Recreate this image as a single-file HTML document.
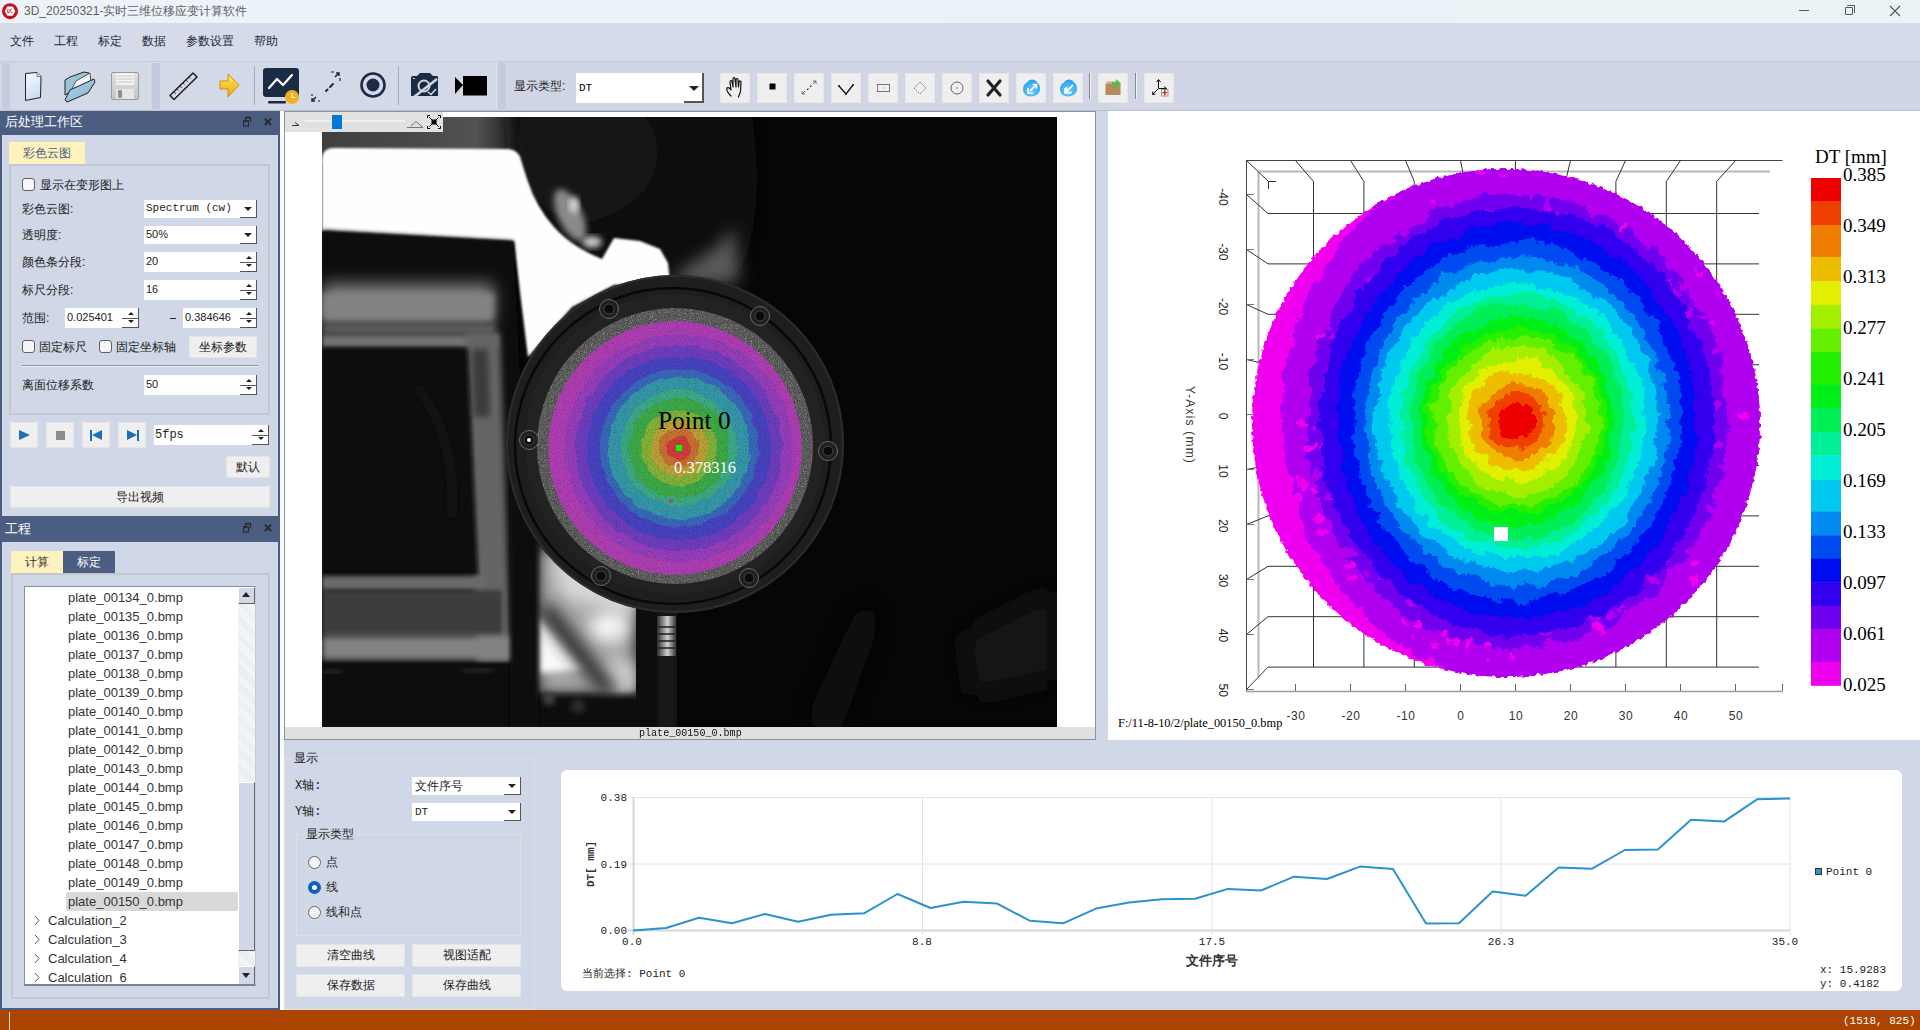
<!DOCTYPE html>
<html><head><meta charset="utf-8">
<style>
*{box-sizing:border-box;margin:0;padding:0}
html,body{width:1920px;height:1030px;overflow:hidden;background:#d0d7e6;font-family:"Liberation Sans",sans-serif;font-size:12px;color:#222}
.a{position:absolute}
.t{position:absolute;white-space:nowrap;line-height:1}
.btn{position:absolute;background:#efefef;border:1px solid #e4e4e4;text-align:center;color:#222;font-size:12px}
.field{position:absolute;background:#fff}
.mono{font-family:"Liberation Mono",monospace}
.spin:after{content:"";position:absolute;right:0;top:0;width:17px;height:100%}
.arrbtn{position:absolute;right:0;top:0;bottom:0;width:17px;border-right:1px solid #555;border-bottom:1px solid #555;background:#fff}
.arrbtn:before{content:"";position:absolute;left:4px;top:50%;margin-top:-2px;border-left:4px solid transparent;border-right:4px solid transparent;border-top:4px solid #222}
.spinbtn{position:absolute;right:0;top:0;bottom:0;width:17px;border-right:1px solid #555;border-bottom:1px solid #555}
.spinbtn i{position:absolute;left:0;right:0;top:50%;height:1px;background:#555}
.spinbtn b{position:absolute;left:6px;width:0;height:0;border-left:3px solid transparent;border-right:3px solid transparent}
.spinbtn b.u{top:4px;border-bottom:3px solid #222}
.spinbtn b.d{bottom:4px;border-top:3px solid #222}
.cb{position:absolute;width:13px;height:13px;border:1px solid #606060;border-radius:3px;background:#f6f6f6}
.hdr{position:absolute;left:0;width:280px;background:#4b5d80;color:#fff}
.grp{position:absolute;border:2px solid #c3c8ce}
.tab{position:absolute;text-align:center;font-size:12px;line-height:22px}
.tb{position:absolute;top:73px;width:30px;height:30px;background:#efefef;border:1px solid #e6e6e6}
.row{position:absolute;left:68px;font-family:"Liberation Sans",sans-serif;font-size:13px;color:#333;line-height:19px;height:19px}
.c{display:inline-block;width:1em;text-align:center;font-style:normal;overflow:visible}
</style></head><body>

<!-- title bar -->
<div class="a" style="left:0;top:0;width:1920px;height:23px;background:linear-gradient(90deg,#eef3fa,#eaf1f8 50%,#eaf3f5)"></div>
<svg class="a" style="left:0;top:0" width="22" height="23"><circle cx="10" cy="11.2" r="8" fill="#c8101c"/><path d="M7.2 6.5H12.8L15.2 11.2L12.8 15.8H7.2L4.8 11.2Z" fill="#fff"/><path d="M7.8 9.2V12.6H9.2M10 9.2V12.6M10.5 9.5L12 9.2M11 12.3H12.5" stroke="#c8101c" stroke-width="0.9" fill="none"/></svg>
<div class="t" style="left:24px;top:5px;font-size:12px;color:#606060">3D_20250321-<i class="c">实</i><i class="c">时</i><i class="c">三</i><i class="c">维</i><i class="c">位</i><i class="c">移</i><i class="c">应</i><i class="c">变</i><i class="c">计</i><i class="c">算</i><i class="c">软</i><i class="c">件</i></div>
<div class="a" style="left:1799px;top:10px;width:10px;height:1px;background:#555"></div>
<div class="a" style="left:1845px;top:7px;width:8px;height:8px;border:1px solid #555;border-radius:1px"></div>
<div class="a" style="left:1847px;top:5px;width:8px;height:8px;border-top:1px solid #555;border-right:1px solid #555;border-radius:1px"></div>
<svg class="a" style="left:1889px;top:5px" width="12" height="12"><path d="M1 1L11 11M11 1L1 11" stroke="#555" stroke-width="1.1"/></svg>

<!-- menu bar -->
<div class="a" style="left:0;top:23px;width:1920px;height:38px;background:#d5dbe8"></div>
<div class="t" style="left:10px;top:35px;font-size:12px;color:#1e2a40"><i class="c">文</i><i class="c">件</i></div>
<div class="t" style="left:54px;top:35px;font-size:12px;color:#1e2a40"><i class="c">工</i><i class="c">程</i></div>
<div class="t" style="left:98px;top:35px;font-size:12px;color:#1e2a40"><i class="c">标</i><i class="c">定</i></div>
<div class="t" style="left:142px;top:35px;font-size:12px;color:#1e2a40"><i class="c">数</i><i class="c">据</i></div>
<div class="t" style="left:186px;top:35px;font-size:12px;color:#1e2a40"><i class="c">参</i><i class="c">数</i><i class="c">设</i><i class="c">置</i></div>
<div class="t" style="left:254px;top:35px;font-size:12px;color:#1e2a40"><i class="c">帮</i><i class="c">助</i></div>

<!-- toolbar -->
<div class="a" style="left:0;top:61px;width:1920px;height:50px;background:#d0d6e5;border-top:1px solid #c2cadc;border-bottom:1px solid #b9c0d0"></div>
<!-- toolbar groups -->
<div class="a" style="left:1px;top:62px;width:149px;height:47px;background:#d3d9e7;border-right:1px solid #dfe3ec"></div>
<div class="a" style="left:2px;top:63px;width:8px;height:46px;background:#c4cbdf"></div>
<div class="a" style="left:151px;top:62px;width:346px;height:47px;background:#d3d9e7;border-right:1px solid #dfe3ec"></div>
<div class="a" style="left:152px;top:63px;width:8px;height:46px;background:#c4cbdf"></div>
<div class="a" style="left:498px;top:63px;width:8px;height:46px;background:#c4cbdf"></div>
<div class="a" style="left:254px;top:66px;width:1px;height:39px;background:#a4abba"></div>
<div class="a" style="left:398px;top:66px;width:1px;height:39px;background:#a4abba"></div>
<svg class="a" style="left:0;top:60px" width="500" height="50">
 <!-- new doc -->
 <defs>
  <linearGradient id="gdoc" x1="0" y1="0" x2="0.3" y2="1"><stop offset="0" stop-color="#fafcff"/><stop offset="1" stop-color="#c9dbf5"/></linearGradient>
  <linearGradient id="gfold" x1="0" y1="0" x2="1" y2="1"><stop offset="0" stop-color="#b9d6ea"/><stop offset="1" stop-color="#7fb0d2"/></linearGradient>
  <linearGradient id="gflop" x1="0" y1="0" x2="0" y2="1"><stop offset="0" stop-color="#e2e2e2"/><stop offset="1" stop-color="#c4c4c4"/></linearGradient>
  <linearGradient id="garr" x1="0" y1="0" x2="0" y2="1"><stop offset="0" stop-color="#ffe566"/><stop offset="1" stop-color="#f0a800"/></linearGradient>
 </defs>
 <path d="M25.5 13.5L37 12.5L41 16.5L40.5 37.5L25.5 40.5Z" fill="url(#gdoc)" stroke="#222" stroke-width="1"/>
 <path d="M37 12.5L37 16.5L41 16.5" fill="#ddd" stroke="#666" stroke-width="0.8"/>
 <!-- folder -->
 <path d="M65 20L70 17L84 12L89 13L91 21L65 35Z" fill="#9cc3de" stroke="#222" stroke-width="1"/>
 <path d="M68 36L76 21L90 13L91 23L70 34Z" fill="#f4f4f4" stroke="#333" stroke-width="0.8"/>
 <path d="M65 40L70 30L94 19L95 22L88 33L67 42Z" fill="url(#gfold)" stroke="#222" stroke-width="1"/>
 <!-- floppy -->
 <rect x="111.5" y="12.5" width="27" height="27" rx="1.5" fill="url(#gflop)" stroke="#9a9a9a"/>
 <rect x="116" y="13" width="18" height="12" fill="#f2f2f2"/>
 <path d="M117 16H133M117 19H133M117 22H133" stroke="#c8c8c8" stroke-width="1"/>
 <rect x="116" y="29" width="18" height="10" fill="#e6e6e6"/>
 <rect x="118" y="30" width="4" height="8" rx="1" fill="#909090"/>
 <!-- ruler -->
 <path d="M170 35.5L193 13L197 17L174 39.5Z" fill="none" stroke="#222" stroke-width="1.6" stroke-linejoin="round"/>
 <path d="M174 32l2 2M177 29l1.5 1.5M180 26l2 2M183 23l1.5 1.5M186 20l2 2M189 17l1.5 1.5" stroke="#333" stroke-width="0.9"/>
 <!-- yellow arrow -->
 <path d="M220 21H228V14L239 25L228 37V29H220Z" fill="url(#garr)" stroke="#c08000" stroke-width="0.8" stroke-linejoin="round"/>
 <!-- monitor -->
 <rect x="263" y="8" width="36" height="29" rx="3" fill="#1c2b44"/>
 <path d="M269 28L277 19L283 25L292 15" stroke="#fff" stroke-width="2.2" fill="none" stroke-linecap="round" stroke-linejoin="round"/>
 <rect x="268" y="41" width="18" height="2.5" rx="1" fill="#1c2b44"/>
 <circle cx="292" cy="37" r="7" fill="#f2b01e"/>
 <path d="M292 33V37.5H295" stroke="#fff" stroke-width="1.2" fill="none"/>
 <!-- expand -->
 <path d="M326 31L327.5 29.5M330 27L333 24" stroke="#1c2b44" stroke-width="2" stroke-linecap="round"/>
 <path d="M336 13L339 13L339 16M339 13L335 17" stroke="#1c2b44" stroke-width="1.5" fill="none"/>
 <path d="M331 12H334M340 18V21" stroke="#1c2b44" stroke-width="1.2"/>
 <path d="M312 41L315 41L312 41L312 38M312 41L316 37" stroke="#1c2b44" stroke-width="1.5" fill="none"/>
 <path d="M312 34V36M318 41H320" stroke="#1c2b44" stroke-width="1.2"/>
 <!-- target -->
 <circle cx="373" cy="25" r="11.5" fill="none" stroke="#1c2b44" stroke-width="2.6"/>
 <circle cx="373" cy="25" r="6.5" fill="#1c2b44"/>
 <!-- camera -->
 <path d="M411 18Q411 16 413 16H417L420 13H430L433 16H437Q438 16 438 18V36H411Z" fill="#1c2b44"/>
 <circle cx="424" cy="26" r="5.5" fill="none" stroke="#d0d6e5" stroke-width="2"/>
 <path d="M414 37L437 19" stroke="#d0d6e5" stroke-width="2.5"/>
 <path d="M428 32L431 34.5L436 29" stroke="#d0d6e5" stroke-width="1.6" fill="none"/>
 <path d="M413 18.5h2" stroke="#d0d6e5" stroke-width="1"/>
 <!-- video -->
 <path d="M455 17L463 25L455 34Z" fill="#000"/>
 <rect x="463" y="16" width="24" height="19.5" fill="#000"/>
</svg>
<div class="t" style="left:514px;top:80px;font-size:12px;color:#222"><i class="c">显</i><i class="c">示</i><i class="c">类</i><i class="c">型</i>:</div>
<div class="field" style="left:576px;top:73px;width:128px;height:30px"><span class="t mono" style="left:3px;top:10px;font-size:11px;color:#000">DT</span>
 <div class="a" style="right:0;top:0;width:20px;height:30px;border-right:2px solid #555;border-bottom:2px solid #555"></div>
 <div class="a" style="left:113px;top:13px;border-left:5px solid transparent;border-right:5px solid transparent;border-top:5px solid #222"></div></div>
<div class="tb" style="left:720px"></div>
<div class="tb" style="left:757px"></div>
<div class="tb" style="left:794px"></div>
<div class="tb" style="left:831px"></div>
<div class="tb" style="left:868px"></div>
<div class="tb" style="left:905px"></div>
<div class="tb" style="left:942px"></div>
<div class="tb" style="left:979px"></div>
<div class="tb" style="left:1016px"></div>
<div class="tb" style="left:1053px"></div>
<div class="tb" style="left:1098px"></div>
<div class="tb" style="left:1144px"></div>
<div class="a" style="left:1089px;top:73px;width:2px;height:26px;border-left:1px solid #888;border-right:1px solid #f4f4f4"></div>
<div class="a" style="left:1135px;top:73px;width:2px;height:26px;border-left:1px solid #888;border-right:1px solid #f4f4f4"></div>
<svg class="a" style="left:700px;top:60px" width="500" height="50">
 <defs>
  <radialGradient id="gcl" cx="0.5" cy="0.7" r="0.7"><stop offset="0" stop-color="#6cd0ff"/><stop offset="1" stop-color="#2a9ee6"/></radialGradient>
 </defs>
 <!-- hand -->
 <path d="M31 36C28 33 26 30 27 28C28 27 30 28 31 30L30 22C30 20 32 20 32 22L33 27L33 19C33 17 35 17 35 19L36 27L36 20C36 18 38 18 38 20L38.5 27L39 22C39 20.5 41 20.5 41 22L40.5 31C40 34 39 35 38.5 37" fill="#efefef" stroke="#111" stroke-width="1.2" stroke-linejoin="round" stroke-linecap="round"/>
 <!-- square -->
 <rect x="69.5" y="23.5" width="6" height="6" fill="#000"/>
 <!-- expand small -->
 <path d="M107 30L108.5 28.5M110 27L111.5 25.5" stroke="#444" stroke-width="1.2"/>
 <path d="M113 21H116V24M116 21L113 24M102 31V34H105M102 34L105 31" stroke="#555" stroke-width="0.8" fill="none"/>
 <!-- V -->
 <path d="M139 26L146 34L153 25" stroke="#111" stroke-width="1.3" fill="none"/>
 <circle cx="139" cy="26" r="1" fill="#111"/><circle cx="146" cy="34" r="1" fill="#111"/><circle cx="153" cy="25" r="1" fill="#111"/>
 <!-- rect -->
 <rect x="177.5" y="24.5" width="12" height="7" fill="none" stroke="#777" stroke-width="1"/>
 <rect x="183" y="27.5" width="1" height="1" fill="#999"/>
 <!-- diamond -->
 <path d="M220 22L226 28L220 34L214 28Z" fill="none" stroke="#777" stroke-width="0.9" stroke-dasharray="2 1"/>
 <!-- circle -->
 <circle cx="257" cy="28" r="6" fill="none" stroke="#555" stroke-width="0.9"/>
 <circle cx="257" cy="28" r="0.8" fill="#555"/>
 <!-- X -->
 <path d="M288 21L300 35M300 21L288 35" stroke="#222" stroke-width="3.2" stroke-linecap="round"/>
 <!-- clouds -->
 <path d="M331 36.5C326 36.5 323 33 323 29C323 25.5 325 23.5 327 22.5C328 20.5 330 19.5 332 19.5C334.5 19.5 336.5 21 337.5 23C339.5 24 340 26.5 340 29C340 33.5 336 36.5 331 36.5Z" fill="url(#gcl)"/>
 <path d="M328 28V33H333M330 31L336 25M332.5 24.5H336.5V28.5" stroke="#fff" stroke-width="1.6" fill="none"/>
 <path d="M368 36.5C363 36.5 360 33 360 29C360 25.5 362 23.5 364 22.5C365 20.5 367 19.5 369 19.5C371.5 19.5 373.5 21 374.5 23C376.5 24 377 26.5 377 29C377 33.5 373 36.5 368 36.5Z" fill="url(#gcl)"/>
 <path d="M365 28V33H370M367 31L373 25M366.5 27V32.5H372" stroke="#fff" stroke-width="1.6" fill="none"/>
 <!-- box -->
 <path d="M405.5 24H420.5V35H405.5Z" fill="#b48d5c"/>
 <path d="M405.5 24L407 21.5H418L420.5 24Z" fill="#cfae7e"/>
 <path d="M412 22H416V19L421 23.5L416 28V25H412Z" fill="#4cc24c"/>
 <!-- axes -->
 <path d="M458.5 20V28.5L453 34M458.5 28.5H466" stroke="#111" stroke-width="1" fill="none"/>
 <path d="M456.5 22L458.5 19.5L460.5 22M464 26.5L466.5 28.5L464 30.5M452.8 31.5L452.5 34.5L455.5 34.2" stroke="#111" stroke-width="1" fill="none"/>
 <rect x="461.5" y="29.5" width="6.5" height="6.5" fill="#fff" stroke="#888" stroke-width="0.8"/>
 <path d="M464.75 30V35.5M462 32.75H467.5" stroke="#d00" stroke-width="1.2"/>
</svg>


<!-- status bar -->
<div class="a" style="left:0;top:1010px;width:1920px;height:20px;background:#ab4400"></div>
<div class="a" style="left:9px;top:1012px;width:1px;height:18px;background:#e8e8e8"></div>
<div class="t mono" style="left:1843px;top:1016px;font-size:11px;color:#fff">(1518, 825) 0</div>

<!-- left dock -->
<!-- left dock -->
<div class="a" style="left:0;top:111px;width:280px;height:899px;background:#4b5d80"></div>
<div class="a" style="left:2px;top:135px;width:276px;height:381px;background:#d0d7e6"></div>
<div class="a" style="left:2px;top:542px;width:276px;height:466px;background:#d0d7e6"></div>
<div class="a" style="left:280px;top:111px;width:4px;height:899px;background:#fbfbfb"></div>
<div class="t" style="left:5px;top:115px;font-size:13px;color:#fff"><i class="c">后</i><i class="c">处</i><i class="c">理</i><i class="c">工</i><i class="c">作</i><i class="c">区</i></div>
<svg class="a" style="left:240px;top:116px" width="36" height="14"><path d="M5.5 1.6H10.5V6.2M5.5 1.6V4" stroke="#2a2a2a" stroke-width="1.2" fill="none"/><path d="M5.2 1.7H10.7" stroke="#2a2a2a" stroke-width="1.6"/><rect x="3.6" y="5.2" width="4.9" height="4.9" fill="none" stroke="#2a2a2a" stroke-width="1.1"/><path d="M3.4 4.9H8.8" stroke="#2a2a2a" stroke-width="1.6"/><path d="M24.7 2.6L31 9M31 2.6L24.7 9" stroke="#2a2a2a" stroke-width="1.9"/></svg>

<div class="tab" style="left:9px;top:142px;width:76px;height:22px;background:#fff2bf;color:#4b5d80"><i class="c">彩</i><i class="c">色</i><i class="c">云</i><i class="c">图</i></div>
<div class="grp" style="left:9px;top:164px;width:261px;height:251px"></div>
<div class="cb" style="left:22px;top:178px"></div>
<div class="t" style="left:40px;top:179px"><i class="c">显</i><i class="c">示</i><i class="c">在</i><i class="c">变</i><i class="c">形</i><i class="c">图</i><i class="c">上</i></div>
<div class="t" style="left:22px;top:203px"><i class="c">彩</i><i class="c">色</i><i class="c">云</i><i class="c">图</i>:</div>
<div class="field" style="left:144px;top:200px;width:113px;height:18px"><span class="t mono" style="left:2px;top:3px;font-size:11px">Spectrum (cw)</span><div class="arrbtn"></div></div>
<div class="t" style="left:22px;top:229px"><i class="c">透</i><i class="c">明</i><i class="c">度</i>:</div>
<div class="field" style="left:144px;top:226px;width:113px;height:18px"><span class="t" style="left:2px;top:3px;font-size:11px">50%</span><div class="arrbtn"></div></div>
<div class="t" style="left:22px;top:256px"><i class="c">颜</i><i class="c">色</i><i class="c">条</i><i class="c">分</i><i class="c">段</i>:</div>
<div class="field" style="left:144px;top:252px;width:113px;height:20px"><span class="t" style="left:2px;top:4px;font-size:11px">20</span><div class="spinbtn"><b class="u"></b><i></i><b class="d"></b></div></div>
<div class="t" style="left:22px;top:284px"><i class="c">标</i><i class="c">尺</i><i class="c">分</i><i class="c">段</i>:</div>
<div class="field" style="left:144px;top:280px;width:113px;height:20px"><span class="t" style="left:2px;top:4px;font-size:11px">16</span><div class="spinbtn"><b class="u"></b><i></i><b class="d"></b></div></div>
<div class="t" style="left:22px;top:312px"><i class="c">范</i><i class="c">围</i>:</div>
<div class="field" style="left:65px;top:308px;width:74px;height:20px"><span class="t" style="left:2px;top:4px;font-size:11px">0.025401</span><div class="spinbtn"><b class="u"></b><i></i><b class="d"></b></div></div>
<div class="a" style="left:170px;top:318px;width:6px;height:1px;background:#222"></div>
<div class="field" style="left:183px;top:308px;width:74px;height:20px"><span class="t" style="left:2px;top:4px;font-size:11px">0.384646</span><div class="spinbtn"><b class="u"></b><i></i><b class="d"></b></div></div>
<div class="cb" style="left:22px;top:340px"></div>
<div class="t" style="left:39px;top:341px"><i class="c">固</i><i class="c">定</i><i class="c">标</i><i class="c">尺</i></div>
<div class="cb" style="left:99px;top:340px"></div>
<div class="t" style="left:116px;top:341px"><i class="c">固</i><i class="c">定</i><i class="c">坐</i><i class="c">标</i><i class="c">轴</i></div>
<div class="btn" style="left:189px;top:336px;width:68px;height:22px;line-height:20px"><i class="c">坐</i><i class="c">标</i><i class="c">参</i><i class="c">数</i></div>
<div class="a" style="left:22px;top:365px;width:236px;height:1px;background:#8e96a6"></div>
<div class="a" style="left:22px;top:366px;width:236px;height:1px;background:#eef0f4"></div>
<div class="t" style="left:22px;top:379px"><i class="c">离</i><i class="c">面</i><i class="c">位</i><i class="c">移</i><i class="c">系</i><i class="c">数</i></div>
<div class="field" style="left:144px;top:375px;width:113px;height:20px"><span class="t" style="left:2px;top:4px;font-size:11px">50</span><div class="spinbtn"><b class="u"></b><i></i><b class="d"></b></div></div>

<div class="btn" style="left:10px;top:422px;width:28px;height:26px"><div class="a" style="left:8px;top:7px;border-top:5px solid transparent;border-bottom:5px solid transparent;border-left:11px solid #1a6fb5"></div></div>
<div class="btn" style="left:46px;top:422px;width:28px;height:26px"><div class="a" style="left:9px;top:8px;width:9px;height:9px;background:#8c8c8c"></div></div>
<div class="btn" style="left:82px;top:422px;width:28px;height:26px"><div class="a" style="left:7px;top:7px;width:2px;height:11px;background:#1a6fb5"></div><div class="a" style="left:9px;top:7px;border-top:5.5px solid transparent;border-bottom:5.5px solid transparent;border-right:10px solid #1a6fb5"></div></div>
<div class="btn" style="left:118px;top:422px;width:28px;height:26px"><div class="a" style="left:8px;top:7px;border-top:5.5px solid transparent;border-bottom:5.5px solid transparent;border-left:10px solid #1a6fb5"></div><div class="a" style="left:18px;top:7px;width:2px;height:11px;background:#1a6fb5"></div></div>
<div class="field" style="left:154px;top:425px;width:115px;height:20px"><span class="t mono" style="left:1px;top:4px;font-size:12px">5fps</span><div class="spinbtn"><b class="u"></b><i></i><b class="d"></b></div></div>
<div class="btn" style="left:226px;top:456px;width:44px;height:22px;line-height:20px"><i class="c">默</i><i class="c">认</i></div>
<div class="btn" style="left:10px;top:486px;width:260px;height:22px;line-height:20px"><i class="c">导</i><i class="c">出</i><i class="c">视</i><i class="c">频</i></div>

<!-- panel 2 -->
<div class="t" style="left:5px;top:522px;font-size:13px;color:#fff"><i class="c">工</i><i class="c">程</i></div>
<svg class="a" style="left:240px;top:522px" width="36" height="14"><path d="M5.5 1.6H10.5V6.2M5.5 1.6V4" stroke="#2a2a2a" stroke-width="1.2" fill="none"/><path d="M5.2 1.7H10.7" stroke="#2a2a2a" stroke-width="1.6"/><rect x="3.6" y="5.2" width="4.9" height="4.9" fill="none" stroke="#2a2a2a" stroke-width="1.1"/><path d="M3.4 4.9H8.8" stroke="#2a2a2a" stroke-width="1.6"/><path d="M24.7 2.6L31 9M31 2.6L24.7 9" stroke="#2a2a2a" stroke-width="1.9"/></svg>
<div class="tab" style="left:11px;top:551px;width:52px;height:22px;background:#fff2bf;color:#333"><i class="c">计</i><i class="c">算</i></div>
<div class="tab" style="left:63px;top:551px;width:52px;height:22px;background:#4b5d80;color:#fff"><i class="c">标</i><i class="c">定</i></div>
<div class="grp" style="left:11px;top:573px;width:259px;height:426px"></div>
<div class="a" style="left:24px;top:586px;width:232px;height:400px;background:#fff;border-top:1px solid #8a9098;border-left:1px solid #8a9098;border-right:1px solid #c8ccd2;border-bottom:2px solid #7d848e;overflow:hidden">
<div class="row" style="left:43px;top:1px">plate_00134_0.bmp</div>
<div class="row" style="left:43px;top:20px">plate_00135_0.bmp</div>
<div class="row" style="left:43px;top:39px">plate_00136_0.bmp</div>
<div class="row" style="left:43px;top:58px">plate_00137_0.bmp</div>
<div class="row" style="left:43px;top:77px">plate_00138_0.bmp</div>
<div class="row" style="left:43px;top:96px">plate_00139_0.bmp</div>
<div class="row" style="left:43px;top:115px">plate_00140_0.bmp</div>
<div class="row" style="left:43px;top:134px">plate_00141_0.bmp</div>
<div class="row" style="left:43px;top:153px">plate_00142_0.bmp</div>
<div class="row" style="left:43px;top:172px">plate_00143_0.bmp</div>
<div class="row" style="left:43px;top:191px">plate_00144_0.bmp</div>
<div class="row" style="left:43px;top:210px">plate_00145_0.bmp</div>
<div class="row" style="left:43px;top:229px">plate_00146_0.bmp</div>
<div class="row" style="left:43px;top:248px">plate_00147_0.bmp</div>
<div class="row" style="left:43px;top:267px">plate_00148_0.bmp</div>
<div class="row" style="left:43px;top:286px">plate_00149_0.bmp</div>
<div class="a" style="left:41px;top:305px;width:172px;height:19px;background:#d9d9d9;border-radius:2px"></div>
<div class="row" style="left:43px;top:305px">plate_00150_0.bmp</div>
<svg class="a" style="left:8px;top:324px" width="8" height="19"><path d="M2 5L6 9.5L2 14" stroke="#555" fill="none" stroke-width="1"/></svg>
<div class="row" style="left:23px;top:324px">Calculation_2</div>
<svg class="a" style="left:8px;top:343px" width="8" height="19"><path d="M2 5L6 9.5L2 14" stroke="#555" fill="none" stroke-width="1"/></svg>
<div class="row" style="left:23px;top:343px">Calculation_3</div>
<svg class="a" style="left:8px;top:362px" width="8" height="19"><path d="M2 5L6 9.5L2 14" stroke="#555" fill="none" stroke-width="1"/></svg>
<div class="row" style="left:23px;top:362px">Calculation_4</div>
<svg class="a" style="left:8px;top:381px" width="8" height="19"><path d="M2 5L6 9.5L2 14" stroke="#555" fill="none" stroke-width="1"/></svg>
<div class="row" style="left:23px;top:381px">Calculation_6</div>
<div class="a" style="left:213px;top:0;width:17px;height:398px;background:repeating-linear-gradient(45deg,#e6e9ef 0 1px,#f8f9fb 1px 2px)"></div>
<div class="a" style="left:213px;top:0;width:17px;height:17px;background:#d0d7e6;border-top:1px solid #fff;border-left:1px solid #fff;border-right:1px solid #666;border-bottom:1px solid #666"><div class="a" style="left:3px;top:4px;border-left:4.5px solid transparent;border-right:4.5px solid transparent;border-bottom:5px solid #222"></div></div>
<div class="a" style="left:213px;top:195px;width:17px;height:169px;background:#d0d7e6;border-top:1px solid #fff;border-left:1px solid #fff;border-right:1px solid #666;border-bottom:1px solid #666"></div>
<div class="a" style="left:213px;top:379px;width:17px;height:19px;background:#d0d7e6;border-top:1px solid #fff;border-left:1px solid #fff;border-right:1px solid #666;border-bottom:1px solid #666"><div class="a" style="left:3px;top:6px;border-left:4.5px solid transparent;border-right:4.5px solid transparent;border-top:5px solid #222"></div></div>
</div>


<!-- image view -->
<div class="a" style="left:284px;top:111px;width:812px;height:629px;background:#fff;border:1px solid #8a929c"></div>
<svg class="a" style="left:322px;top:117px" width="735" height="610" viewBox="0 0 735 610">
<defs>
 <filter id="b1" x="-20%" y="-20%" width="140%" height="140%"><feGaussianBlur stdDeviation="1.2"/></filter>
 <filter id="b2" x="-20%" y="-20%" width="140%" height="140%"><feGaussianBlur stdDeviation="2.2"/></filter>
 <filter id="b3" x="-20%" y="-20%" width="140%" height="140%"><feGaussianBlur stdDeviation="3"/></filter>
 <filter id="b8" x="-50%" y="-50%" width="200%" height="200%"><feGaussianBlur stdDeviation="8"/></filter>
 <filter id="b15" x="-50%" y="-50%" width="200%" height="200%"><feGaussianBlur stdDeviation="15"/></filter>
 <filter id="noise" x="0" y="0" width="100%" height="100%">
  <feTurbulence type="fractalNoise" baseFrequency="0.9" numOctaves="1" seed="3" result="n"/>
  <feColorMatrix type="matrix" values="0 0 0 0 0  0 0 0 0 0  0 0 0 0 0  2.2 0 0 0 -1.1" in="n" result="a"/>
  <feComposite in="SourceGraphic" in2="a" operator="in"/>
 </filter>
 <filter id="noise2" x="0" y="0" width="100%" height="100%">
  <feTurbulence type="fractalNoise" baseFrequency="0.85" numOctaves="1" seed="9" result="n"/>
  <feColorMatrix type="matrix" values="0 0 0 0 0  0 0 0 0 0  0 0 0 0 0  2.5 0 0 0 -1.4" in="n" result="a"/>
  <feComposite in="SourceGraphic" in2="a" operator="in"/>
 </filter>
 <filter id="rough" x="-10%" y="-10%" width="120%" height="120%">
  <feTurbulence type="fractalNoise" baseFrequency="0.09" numOctaves="2" seed="7" result="t"/>
  <feDisplacementMap in="SourceGraphic" in2="t" scale="6" xChannelSelector="R" yChannelSelector="G"/>
 </filter>
 <clipPath id="cdisc"><circle cx="353" cy="331" r="127"/></clipPath>
 <clipPath id="cring"><circle cx="353" cy="329" r="138"/></clipPath>
 <linearGradient id="gtop" x1="0" y1="0" x2="1" y2="0"><stop offset="0" stop-color="#404040"/><stop offset="0.45" stop-color="#484848"/><stop offset="0.75" stop-color="#525252"/><stop offset="0.92" stop-color="#2a2a2a"/><stop offset="1" stop-color="#151515"/></linearGradient>
 <radialGradient id="ghead" cx="0.3" cy="0.3" r="0.8"><stop offset="0" stop-color="#141414"/><stop offset="0.6" stop-color="#101010"/><stop offset="1" stop-color="#070707"/></radialGradient>
 <linearGradient id="gscr" x1="0" y1="0" x2="0" y2="1"><stop offset="0" stop-color="#555"/><stop offset="0.35" stop-color="#9a9a9a"/><stop offset="0.7" stop-color="#a4a4a4"/><stop offset="1" stop-color="#8a8a8a"/></linearGradient>
</defs>
<rect width="735" height="610" fill="#060606"/>
<path d="M0 0H205V48H0Z" fill="url(#gtop)"/>
<!-- head/hair -->
<path d="M185 -30H425Q445 70 425 140Q400 185 340 190L250 140Q205 100 190 40Z" fill="url(#ghead)" filter="url(#b8)"/>
<path d="M350 160L395 130L412 110L418 165L360 168Z" fill="#5a5a5a" filter="url(#b8)"/>
<ellipse cx="140" cy="590" rx="40" ry="12" fill="#1a1a1a" filter="url(#b8)"/>
<path d="M480 610L540 480L560 500L520 610Z" fill="#0d0d0d" filter="url(#b15)"/>
<path d="M640 520L735 470V560L650 580Z" fill="#141414" filter="url(#b15)"/>
<!-- white window -->
<path d="M0 43Q0 31 12 31L186 32Q197 33 199 43L205 62Q214 90 232 110Q250 130 280 142L292 121L318 124L338 132L346 146L348 165L292 168L250 190L222 222L206 240L198 175L192 124L0 114Z" fill="#fefefe" filter="url(#b1)"/>
<!-- ear -->
<ellipse cx="248" cy="98" rx="12" ry="28" fill="#8a8a8a" filter="url(#b3)" transform="rotate(-25 248 98)"/>
<ellipse cx="252" cy="88" rx="5" ry="8" fill="#d8d8d8" filter="url(#b3)"/>
<ellipse cx="270" cy="125" rx="10" ry="6" fill="#c8c8c8" filter="url(#b3)"/>
<!-- monitor -->
<path d="M0 113L191 124L200 300L210 610L0 610Z" fill="#0b0b0b" filter="url(#b2)"/>
<path d="M0 166H172V206H0Z" fill="#7a7a7a" filter="url(#b8)"/>
<path d="M0 176H172V204H0Z" fill="#828282" filter="url(#b3)"/>
<path d="M0 206H174V218H0Z" fill="#5c5c5c" filter="url(#b3)"/>
<path d="M0 218H176V231H0Z" fill="#727272" filter="url(#b2)"/>
<path d="M143 216H178L189 545H155Z" fill="#656565" filter="url(#b3)"/>
<path d="M150 232L166 232L168 300L152 300Z" fill="#3a3a3a" filter="url(#b3)"/>
<path d="M0 231H145L156 459H0Z" fill="#0a0a0a" filter="url(#b2)"/>
<path d="M95 270Q135 320 130 400" stroke="#1e1e1e" stroke-width="4" fill="none" filter="url(#b3)"/>
<path d="M0 459H163V473H0Z" fill="#6a6a6a" filter="url(#b2)"/>
<path d="M0 473H180V519H0Z" fill="#3c3c3c" filter="url(#b2)"/>
<path d="M0 519H189V543H0Z" fill="#828282" filter="url(#b3)"/>
<rect x="0" y="546" width="205" height="64" fill="#0a0a0a" filter="url(#b1)"/>
<path d="M0 556H20M140 552H170" stroke="#262626" stroke-width="6" filter="url(#b3)"/>
<!-- bright patches right of monitor -->
<path d="M216 430L314 430L314 578L216 578Z" fill="#a8a8a8" filter="url(#b8)"/>
<path d="M230 440L314 440L314 500L240 480Z" fill="#d8d8d8" filter="url(#b8)"/>
<ellipse cx="287" cy="510" rx="20" ry="15" fill="#f6f6f6" filter="url(#b8)"/>
<path d="M218 500L262 552L218 556Z" fill="#fafafa" filter="url(#b3)"/>
<path d="M280 545H314V578H280Z" fill="#cfcfcf" filter="url(#b8)"/>
<path d="M222 490L290 578" stroke="#2a2a2a" stroke-width="17" filter="url(#b8)"/>
<rect x="210" y="578" width="110" height="40" fill="#0a0a0a" filter="url(#b3)"/>
<circle cx="227" cy="582" r="6" fill="#4a4a4a" filter="url(#b3)"/>
<circle cx="256" cy="589" r="7" fill="#2e2e2e" filter="url(#b3)"/>
<rect x="189" y="300" width="27" height="310" fill="#0c0c0c" filter="url(#b2)"/>
<!-- stand -->
<rect x="314" y="490" width="21" height="125" fill="#0d0d0d"/>
<rect x="335" y="490" width="20" height="125" fill="#141414"/>
<defs><linearGradient id="gcon" x1="0" y1="0" x2="1" y2="0"><stop offset="0" stop-color="#2a2a2a"/><stop offset="0.55" stop-color="#d0d0d0"/><stop offset="1" stop-color="#333"/></linearGradient></defs>
<rect x="335" y="499" width="19" height="40" fill="url(#gcon)"/>
<path d="M336 510H353M336 517H353M336 524H353M336 531H353" stroke="#1e1e1e" stroke-width="1.6"/>
<rect x="337" y="539" width="15" height="76" fill="#181818"/>
<!-- fixture -->
<circle cx="353" cy="327" r="169" fill="#1e1e1e"/>
<circle cx="353" cy="327" r="168" fill="none" stroke="#2c2c2c" stroke-width="2"/>
<circle cx="351" cy="329" r="158" fill="none" stroke="#080808" stroke-width="2.5"/>
<circle cx="353" cy="327" r="150" fill="#222"/>
<circle cx="353" cy="329" r="138" fill="#5c5c5c"/>
<g clip-path="url(#cring)"><rect x="200" y="180" width="310" height="300" fill="#000" filter="url(#noise)" opacity="0.7"/><rect x="200" y="180" width="310" height="300" fill="#fff" filter="url(#noise2)" opacity="0.65"/></g>

<g clip-path="url(#cdisc)">
<circle cx="353" cy="331" r="127" fill="rgb(172,62,178)"/>
<g filter="url(#rough)">
<circle cx="357" cy="331" r="114.0" fill="rgb(150,62,186)"/>
<circle cx="357" cy="331" r="103.0" fill="rgb(110,62,190)"/>
<circle cx="357" cy="331" r="92.0" fill="rgb(70,66,190)"/>
<circle cx="357" cy="331" r="79.0" fill="rgb(56,104,184)"/>
<circle cx="357" cy="331" r="71.0" fill="rgb(52,150,168)"/>
<circle cx="357" cy="331" r="58.0" fill="rgb(60,168,132)"/>
<circle cx="357" cy="331" r="50.0" fill="rgb(62,168,70)"/>
<circle cx="357" cy="331" r="38.0" fill="rgb(130,176,56)"/>
<circle cx="357" cy="331" r="28.5" fill="rgb(186,160,52)"/>
<circle cx="357" cy="331" r="20.0" fill="rgb(200,112,50)"/>
<circle cx="357" cy="331" r="12.0" fill="rgb(204,62,58)"/>
</g>
<rect x="220" y="195" width="270" height="270" fill="#000" filter="url(#noise)" opacity="0.35"/>
</g>
<circle cx="287" cy="192" r="9.5" fill="#202020" stroke="#6a6a6a" stroke-width="1"/><circle cx="287" cy="192" r="5" fill="#0a0a0a" stroke="#444" stroke-width="1"/>
<circle cx="438" cy="199" r="9.5" fill="#202020" stroke="#6a6a6a" stroke-width="1"/><circle cx="438" cy="199" r="5" fill="#0a0a0a" stroke="#444" stroke-width="1"/>
<circle cx="207" cy="323" r="9.5" fill="#202020" stroke="#6a6a6a" stroke-width="1"/><circle cx="207" cy="323" r="5" fill="#0a0a0a" stroke="#444" stroke-width="1"/>
<circle cx="506" cy="334" r="9.5" fill="#202020" stroke="#6a6a6a" stroke-width="1"/><circle cx="506" cy="334" r="5" fill="#0a0a0a" stroke="#444" stroke-width="1"/>
<circle cx="279" cy="459" r="9.5" fill="#202020" stroke="#6a6a6a" stroke-width="1"/><circle cx="279" cy="459" r="5" fill="#0a0a0a" stroke="#444" stroke-width="1"/>
<circle cx="427" cy="461" r="9.5" fill="#202020" stroke="#6a6a6a" stroke-width="1"/><circle cx="427" cy="461" r="5" fill="#0a0a0a" stroke="#444" stroke-width="1"/>
<circle cx="207" cy="323" r="2" fill="#fff"/>
<text x="336" y="312" font-family="Liberation Serif" font-size="25.4" fill="#000">Point 0</text>
<rect x="354" y="328" width="6" height="6" fill="#00ff00"/>
<text x="352" y="356" font-family="Liberation Serif" font-size="16.5" fill="#fff">0.378316</text>
<rect x="347" y="382" width="4" height="4" fill="#8a5a6a"/>
</svg>
<!-- slider overlay -->
<div class="a" style="left:285px;top:112px;width:158px;height:20px;background:#e1e1e1"></div>
<svg class="a" style="left:285px;top:112px" width="158" height="20">
 <rect x="20" y="8" width="100" height="2" fill="#f0f0f0"/>
 <rect x="47" y="3" width="10" height="14" fill="#0078d7"/>
 <path d="M122 15.5H138L131 9.5L126 14" stroke="#777" stroke-width="1" fill="none"/>
 <path d="M142.5 6V3.5H145M155.5 6V3.5H153M142.5 14V16.5H145M155.5 14V16.5H153" stroke="#000" stroke-width="1" fill="none"/>
 <path d="M144.5 5.5L147.5 8.5M153.5 5.5L150.5 8.5M144.5 14.5L147.5 11.5M153.5 14.5L150.5 11.5" stroke="#000" stroke-width="1"/>
 <rect x="146.5" y="7.5" width="5" height="5" fill="#000"/>
 <path d="M7 13.5H14M10 10.5L14 13.5" stroke="#333" stroke-width="1" fill="none"/>
</svg>
<div class="a" style="left:285px;top:727px;width:810px;height:12px;background:#e0e0e0"></div>
<div class="t mono" style="left:639px;top:728px;font-size:11px;color:#111;transform:scaleX(0.915);transform-origin:0 0">plate_00150_0.bmp</div>


<!-- 3d plot -->
<div class="a" style="left:1108px;top:111px;width:812px;height:629px;background:#fff"></div>
<svg class="a" style="left:1108px;top:111px" width="812" height="629" viewBox="1108 111 812 629">
<defs>
 <filter id="rough3" x="-10%" y="-10%" width="120%" height="120%">
  <feTurbulence type="fractalNoise" baseFrequency="0.06" numOctaves="3" seed="11" result="t"/>
  <feDisplacementMap in="SourceGraphic" in2="t" scale="14" xChannelSelector="R" yChannelSelector="G"/>
 </filter>
 <filter id="rough4" x="-10%" y="-10%" width="120%" height="120%">
  <feTurbulence type="fractalNoise" baseFrequency="0.12" numOctaves="2" seed="5" result="t"/>
  <feDisplacementMap in="SourceGraphic" in2="t" scale="5" xChannelSelector="R" yChannelSelector="G"/>
 </filter>
 <filter id="rough5" x="-5%" y="-5%" width="110%" height="110%">
  <feTurbulence type="fractalNoise" baseFrequency="0.25" numOctaves="1" seed="2" result="t"/>
  <feDisplacementMap in="SourceGraphic" in2="t" scale="6" xChannelSelector="R" yChannelSelector="G"/>
 </filter>
 <clipPath id="c3d"><circle cx="1506" cy="423" r="254"/></clipPath>
</defs>
<path d="M1246.5 160.5H1782.5M1246.5 160.5V691" stroke="#444" stroke-width="1" fill="none"/><path d="M1246 691.5H1782.5" stroke="#9a9a9a" stroke-width="1.6" fill="none"/>
<path d="M1258.5 171.5H1770M1258.5 171.5V677" stroke="#b8b8b8" stroke-width="2" fill="none"/>
<path d="M1295.5 160.5L1313.5 181.5V667" stroke="#333" stroke-width="1" fill="none"/>
<path d="M1350.5 160.5L1363.9 181.5V667" stroke="#333" stroke-width="1" fill="none"/>
<path d="M1405.5 160.5L1414.3 181.5V667" stroke="#333" stroke-width="1" fill="none"/>
<path d="M1460.5 160.5L1464.7 181.5V667" stroke="#333" stroke-width="1" fill="none"/>
<path d="M1515.5 160.5L1515.1 181.5V667" stroke="#333" stroke-width="1" fill="none"/>
<path d="M1570.5 160.5L1565.5 181.5V667" stroke="#333" stroke-width="1" fill="none"/>
<path d="M1625.5 160.5L1615.9 181.5V667" stroke="#333" stroke-width="1" fill="none"/>
<path d="M1680.5 160.5L1666.3 181.5V667" stroke="#333" stroke-width="1" fill="none"/>
<path d="M1735.5 160.5L1716.7 181.5V667" stroke="#333" stroke-width="1" fill="none"/>
<path d="M1246.5 194.5 L1268 213.5 H1759" stroke="#333" stroke-width="1" fill="none"/>
<path d="M1246.5 249.5 L1268 263.9 H1759" stroke="#333" stroke-width="1" fill="none"/>
<path d="M1246.5 304.5 L1268 314.3 H1759" stroke="#333" stroke-width="1" fill="none"/>
<path d="M1246.5 359.5 L1268 364.7 H1759" stroke="#333" stroke-width="1" fill="none"/>
<path d="M1246.5 414.5 L1268 415.1 H1759" stroke="#333" stroke-width="1" fill="none"/>
<path d="M1246.5 469.5 L1268 465.5 H1759" stroke="#333" stroke-width="1" fill="none"/>
<path d="M1246.5 524.5 L1268 515.9 H1759" stroke="#333" stroke-width="1" fill="none"/>
<path d="M1246.5 579.5 L1268 566.3 H1759" stroke="#333" stroke-width="1" fill="none"/>
<path d="M1246.5 634.5 L1268 616.7 H1759" stroke="#333" stroke-width="1" fill="none"/>
<path d="M1246.5 689.5 L1268 667.1 H1759" stroke="#333" stroke-width="1" fill="none"/>
<path d="M1246.5 160.5L1268.5 181.5H1276M1268.5 181.5V189" stroke="#333" stroke-width="1" fill="none"/>
<path d="M1246.5 194.5H1254" stroke="#777" stroke-width="1"/>
<path d="M1246.5 249.5H1254" stroke="#777" stroke-width="1"/>
<path d="M1246.5 304.5H1254" stroke="#777" stroke-width="1"/>
<path d="M1246.5 359.5H1254" stroke="#777" stroke-width="1"/>
<path d="M1246.5 414.5H1254" stroke="#777" stroke-width="1"/>
<path d="M1246.5 469.5H1254" stroke="#777" stroke-width="1"/>
<path d="M1246.5 524.5H1254" stroke="#777" stroke-width="1"/>
<path d="M1246.5 579.5H1254" stroke="#777" stroke-width="1"/>
<path d="M1246.5 634.5H1254" stroke="#777" stroke-width="1"/>
<path d="M1246.5 689.5H1254" stroke="#777" stroke-width="1"/>
<path d="M1295.5 691V684" stroke="#666" stroke-width="1"/>
<path d="M1350.5 691V684" stroke="#666" stroke-width="1"/>
<path d="M1405.5 691V684" stroke="#666" stroke-width="1"/>
<path d="M1460.5 691V684" stroke="#666" stroke-width="1"/>
<path d="M1515.5 691V684" stroke="#666" stroke-width="1"/>
<path d="M1570.5 691V684" stroke="#666" stroke-width="1"/>
<path d="M1625.5 691V684" stroke="#666" stroke-width="1"/>
<path d="M1680.5 691V684" stroke="#666" stroke-width="1"/>
<path d="M1735.5 691V684" stroke="#666" stroke-width="1"/>
<path d="M1782.5 691V684" stroke="#666" stroke-width="1"/>
<g filter="url(#rough5)"><g clip-path="url(#c3d)">
<rect x="1240" y="160" width="530" height="530" fill="rgb(239,0,239)"/>
<g filter="url(#rough3)">
<ellipse class="bd" cx="1524" cy="417" rx="242" ry="264" fill="rgb(176,0,239)"/>
<ellipse class="bd" cx="1517" cy="421" rx="211.0" ry="227.0" fill="rgb(113,0,239)"/>
<ellipse cx="1314" cy="317" rx="4.6" ry="4.7" fill="rgb(176,0,239)"/>
<ellipse cx="1695" cy="296" rx="4.5" ry="3.5" fill="rgb(176,0,239)"/>
<ellipse cx="1734" cy="370" rx="5.8" ry="3.9" fill="rgb(176,0,239)"/>
<ellipse cx="1449" cy="643" rx="2.2" ry="3.8" fill="rgb(239,0,239)"/>
<ellipse cx="1498" cy="184" rx="4.2" ry="4.0" fill="rgb(176,0,239)"/>
<ellipse cx="1671" cy="573" rx="3.1" ry="2.6" fill="rgb(176,0,239)"/>
<ellipse cx="1699" cy="271" rx="3.3" ry="2.7" fill="rgb(239,0,239)"/>
<ellipse cx="1488" cy="643" rx="3.2" ry="3.2" fill="rgb(239,0,239)"/>
<ellipse cx="1600" cy="630" rx="5.5" ry="4.2" fill="rgb(239,0,239)"/>
<ellipse cx="1321" cy="337" rx="2.5" ry="2.9" fill="rgb(239,0,239)"/>
<ellipse cx="1718" cy="503" rx="2.8" ry="4.0" fill="rgb(176,0,239)"/>
<ellipse cx="1305" cy="484" rx="4.2" ry="4.4" fill="rgb(239,0,239)"/>
<ellipse cx="1443" cy="633" rx="3.5" ry="4.3" fill="rgb(239,0,239)"/>
<ellipse cx="1694" cy="582" rx="4.2" ry="3.3" fill="rgb(239,0,239)"/>
<ellipse cx="1424" cy="652" rx="4.0" ry="3.8" fill="rgb(176,0,239)"/>
<ellipse cx="1722" cy="468" rx="4.9" ry="3.4" fill="rgb(176,0,239)"/>
<ellipse cx="1322" cy="534" rx="5.5" ry="4.9" fill="rgb(239,0,239)"/>
<ellipse cx="1311" cy="447" rx="5.2" ry="3.0" fill="rgb(239,0,239)"/>
<ellipse cx="1684" cy="563" rx="4.5" ry="2.9" fill="rgb(176,0,239)"/>
<ellipse cx="1354" cy="247" rx="3.7" ry="4.4" fill="rgb(176,0,239)"/>
<ellipse cx="1723" cy="308" rx="4.3" ry="3.5" fill="rgb(176,0,239)"/>
<ellipse cx="1649" cy="224" rx="2.9" ry="2.3" fill="rgb(176,0,239)"/>
<ellipse cx="1489" cy="661" rx="2.8" ry="2.6" fill="rgb(239,0,239)"/>
<ellipse cx="1716" cy="351" rx="5.1" ry="3.7" fill="rgb(176,0,239)"/>
<ellipse cx="1743" cy="414" rx="5.8" ry="3.2" fill="rgb(239,0,239)"/>
<ellipse cx="1716" cy="296" rx="2.2" ry="2.1" fill="rgb(239,0,239)"/>
<ellipse cx="1561" cy="177" rx="2.5" ry="3.1" fill="rgb(176,0,239)"/>
<ellipse cx="1586" cy="186" rx="5.9" ry="4.3" fill="rgb(176,0,239)"/>
<ellipse cx="1623" cy="228" rx="5.4" ry="3.9" fill="rgb(239,0,239)"/>
<ellipse cx="1419" cy="623" rx="3.4" ry="3.5" fill="rgb(239,0,239)"/>
<ellipse cx="1315" cy="492" rx="2.8" ry="2.4" fill="rgb(239,0,239)"/>
<ellipse cx="1694" cy="561" rx="5.2" ry="3.6" fill="rgb(239,0,239)"/>
<ellipse cx="1299" cy="482" rx="2.1" ry="2.2" fill="rgb(239,0,239)"/>
<ellipse cx="1404" cy="622" rx="3.2" ry="4.5" fill="rgb(239,0,239)"/>
<ellipse cx="1736" cy="434" rx="3.1" ry="4.2" fill="rgb(176,0,239)"/>
<ellipse cx="1550" cy="644" rx="5.9" ry="3.0" fill="rgb(176,0,239)"/>
<ellipse cx="1691" cy="592" rx="5.8" ry="3.0" fill="rgb(176,0,239)"/>
<ellipse cx="1594" cy="211" rx="5.2" ry="3.5" fill="rgb(176,0,239)"/>
<ellipse cx="1570" cy="192" rx="2.3" ry="3.9" fill="rgb(176,0,239)"/>
<ellipse cx="1597" cy="635" rx="3.7" ry="4.4" fill="rgb(176,0,239)"/>
<ellipse cx="1469" cy="662" rx="2.9" ry="4.0" fill="rgb(176,0,239)"/>
<ellipse cx="1736" cy="345" rx="3.6" ry="2.3" fill="rgb(176,0,239)"/>
<ellipse cx="1542" cy="193" rx="2.1" ry="2.5" fill="rgb(176,0,239)"/>
<ellipse cx="1353" cy="580" rx="3.7" ry="4.3" fill="rgb(239,0,239)"/>
<ellipse cx="1690" cy="552" rx="5.6" ry="4.8" fill="rgb(176,0,239)"/>
<ellipse cx="1327" cy="325" rx="5.6" ry="3.6" fill="rgb(176,0,239)"/>
<ellipse cx="1352" cy="584" rx="4.0" ry="3.5" fill="rgb(176,0,239)"/>
<ellipse cx="1435" cy="645" rx="3.1" ry="3.4" fill="rgb(239,0,239)"/>
<ellipse cx="1701" cy="304" rx="3.2" ry="4.6" fill="rgb(176,0,239)"/>
<ellipse cx="1441" cy="657" rx="5.2" ry="2.6" fill="rgb(176,0,239)"/>
<ellipse cx="1298" cy="498" rx="4.4" ry="4.6" fill="rgb(239,0,239)"/>
<ellipse cx="1715" cy="326" rx="2.1" ry="2.9" fill="rgb(239,0,239)"/>
<ellipse cx="1312" cy="353" rx="4.5" ry="4.5" fill="rgb(176,0,239)"/>
<ellipse cx="1411" cy="636" rx="3.2" ry="2.3" fill="rgb(239,0,239)"/>
<ellipse cx="1573" cy="176" rx="4.9" ry="2.2" fill="rgb(239,0,239)"/>
<ellipse cx="1330" cy="537" rx="4.0" ry="3.1" fill="rgb(176,0,239)"/>
<ellipse cx="1511" cy="653" rx="2.1" ry="3.7" fill="rgb(239,0,239)"/>
<ellipse cx="1501" cy="177" rx="6.0" ry="2.2" fill="rgb(239,0,239)"/>
<ellipse cx="1320" cy="519" rx="5.8" ry="4.1" fill="rgb(239,0,239)"/>
<ellipse cx="1661" cy="590" rx="3.5" ry="2.9" fill="rgb(176,0,239)"/>
<ellipse cx="1455" cy="645" rx="3.2" ry="3.8" fill="rgb(239,0,239)"/>
<ellipse cx="1722" cy="514" rx="3.3" ry="4.6" fill="rgb(176,0,239)"/>
<ellipse cx="1720" cy="314" rx="2.7" ry="3.9" fill="rgb(176,0,239)"/>
<ellipse cx="1466" cy="644" rx="2.8" ry="3.9" fill="rgb(239,0,239)"/>
<ellipse cx="1530" cy="197" rx="2.8" ry="3.0" fill="rgb(176,0,239)"/>
<ellipse cx="1478" cy="171" rx="5.0" ry="3.0" fill="rgb(239,0,239)"/>
<ellipse cx="1714" cy="337" rx="2.3" ry="3.7" fill="rgb(176,0,239)"/>
<ellipse cx="1507" cy="169" rx="3.6" ry="3.9" fill="rgb(176,0,239)"/>
<ellipse cx="1383" cy="226" rx="5.7" ry="3.9" fill="rgb(176,0,239)"/>
<ellipse cx="1679" cy="248" rx="5.2" ry="3.1" fill="rgb(176,0,239)"/>
<ellipse cx="1627" cy="200" rx="5.6" ry="4.1" fill="rgb(176,0,239)"/>
<ellipse cx="1302" cy="424" rx="5.6" ry="3.1" fill="rgb(239,0,239)"/>
<ellipse cx="1573" cy="661" rx="2.8" ry="2.4" fill="rgb(176,0,239)"/>
<ellipse cx="1686" cy="577" rx="3.0" ry="4.4" fill="rgb(176,0,239)"/>
<ellipse cx="1721" cy="487" rx="5.0" ry="3.5" fill="rgb(176,0,239)"/>
<ellipse cx="1434" cy="203" rx="4.1" ry="2.0" fill="rgb(239,0,239)"/>
<ellipse cx="1583" cy="645" rx="2.8" ry="2.7" fill="rgb(176,0,239)"/>
<ellipse cx="1742" cy="407" rx="5.1" ry="4.1" fill="rgb(176,0,239)"/>
<ellipse cx="1608" cy="201" rx="2.4" ry="3.3" fill="rgb(176,0,239)"/>
<ellipse cx="1350" cy="566" rx="5.5" ry="2.7" fill="rgb(239,0,239)"/>
<ellipse cx="1668" cy="562" rx="2.7" ry="2.1" fill="rgb(176,0,239)"/>
<ellipse cx="1691" cy="307" rx="2.1" ry="3.6" fill="rgb(176,0,239)"/>
<ellipse cx="1610" cy="614" rx="5.8" ry="4.9" fill="rgb(176,0,239)"/>
<ellipse cx="1351" cy="555" rx="4.0" ry="2.2" fill="rgb(176,0,239)"/>
<ellipse cx="1349" cy="552" rx="5.1" ry="4.2" fill="rgb(176,0,239)"/>
<ellipse cx="1717" cy="405" rx="4.8" ry="4.5" fill="rgb(176,0,239)"/>
<ellipse cx="1703" cy="318" rx="5.5" ry="3.0" fill="rgb(176,0,239)"/>
<ellipse cx="1370" cy="574" rx="2.5" ry="2.9" fill="rgb(176,0,239)"/>
<ellipse cx="1381" cy="575" rx="2.7" ry="4.0" fill="rgb(176,0,239)"/>
<ellipse cx="1446" cy="616" rx="5.2" ry="4.8" fill="rgb(176,0,239)"/>
<ellipse cx="1551" cy="639" rx="2.3" ry="2.7" fill="rgb(176,0,239)"/>
<ellipse cx="1622" cy="610" rx="4.2" ry="4.5" fill="rgb(176,0,239)"/>
<ellipse cx="1406" cy="233" rx="5.5" ry="3.8" fill="rgb(176,0,239)"/>
<ellipse cx="1547" cy="630" rx="5.4" ry="4.5" fill="rgb(176,0,239)"/>
<ellipse cx="1389" cy="242" rx="5.2" ry="3.2" fill="rgb(176,0,239)"/>
<ellipse cx="1596" cy="620" rx="5.7" ry="4.7" fill="rgb(176,0,239)"/>
<ellipse cx="1711" cy="429" rx="3.8" ry="4.7" fill="rgb(176,0,239)"/>
<ellipse cx="1668" cy="266" rx="2.3" ry="2.6" fill="rgb(176,0,239)"/>
<ellipse cx="1547" cy="207" rx="3.3" ry="4.9" fill="rgb(176,0,239)"/>
<ellipse cx="1718" cy="445" rx="5.5" ry="4.1" fill="rgb(176,0,239)"/>
<ellipse cx="1669" cy="283" rx="4.2" ry="4.9" fill="rgb(176,0,239)"/>
<ellipse cx="1653" cy="581" rx="6.0" ry="2.5" fill="rgb(176,0,239)"/>
<ellipse cx="1548" cy="201" rx="3.0" ry="5.0" fill="rgb(176,0,239)"/>
<ellipse cx="1555" cy="214" rx="6.0" ry="4.6" fill="rgb(176,0,239)"/>
<ellipse cx="1324" cy="448" rx="5.1" ry="3.8" fill="rgb(176,0,239)"/>
<ellipse cx="1510" cy="211" rx="3.9" ry="4.4" fill="rgb(176,0,239)"/>
<ellipse cx="1490" cy="211" rx="3.3" ry="3.4" fill="rgb(176,0,239)"/>
<ellipse cx="1313" cy="478" rx="5.7" ry="2.0" fill="rgb(176,0,239)"/>
<ellipse cx="1372" cy="278" rx="5.5" ry="3.6" fill="rgb(176,0,239)"/>
<ellipse cx="1685" cy="286" rx="5.7" ry="2.5" fill="rgb(176,0,239)"/>
<ellipse cx="1708" cy="508" rx="3.9" ry="4.3" fill="rgb(176,0,239)"/>
<ellipse cx="1329" cy="498" rx="4.9" ry="3.1" fill="rgb(176,0,239)"/>
<ellipse cx="1316" cy="426" rx="4.7" ry="2.2" fill="rgb(176,0,239)"/>
<ellipse cx="1319" cy="472" rx="4.7" ry="4.7" fill="rgb(176,0,239)"/>
<ellipse cx="1372" cy="585" rx="4.8" ry="3.2" fill="rgb(176,0,239)"/>
<ellipse cx="1332" cy="339" rx="4.6" ry="2.1" fill="rgb(176,0,239)"/>
<ellipse cx="1677" cy="292" rx="2.0" ry="2.3" fill="rgb(176,0,239)"/>
<ellipse cx="1411" cy="602" rx="5.4" ry="3.1" fill="rgb(176,0,239)"/>
<ellipse cx="1689" cy="314" rx="3.4" ry="4.9" fill="rgb(176,0,239)"/>
<ellipse cx="1649" cy="246" rx="2.5" ry="2.2" fill="rgb(176,0,239)"/>
<ellipse class="bd" cx="1517" cy="421" rx="197.0" ry="214.0" fill="rgb(50,0,239)"/>
<ellipse class="bd" cx="1517" cy="421" rx="179.5" ry="197.0" fill="rgb(0,12,239)"/>
<ellipse class="bd" cx="1517" cy="421" rx="164.5" ry="180.0" fill="rgb(0,75,239)"/>
<ellipse class="bd" cx="1517" cy="421" rx="151.8" ry="165.0" fill="rgb(0,138,239)"/>
<ellipse class="bd" cx="1517" cy="421" rx="142.0" ry="151.0" fill="rgb(0,201,239)"/>
<ellipse class="bd" cx="1517" cy="421" rx="127.5" ry="138.0" fill="rgb(0,239,214)"/>
<ellipse class="bd" cx="1517" cy="421" rx="116.5" ry="127.0" fill="rgb(0,239,151)"/>
<ellipse class="bd" cx="1517" cy="421" rx="106.5" ry="118.0" fill="rgb(0,239,88)"/>
<ellipse class="bd" cx="1517" cy="421" rx="96.5" ry="105.0" fill="rgb(0,239,25)"/>
<ellipse class="bd" cx="1517" cy="421" rx="90.0" ry="92.0" fill="rgb(37,239,0)"/>
<ellipse class="bd" cx="1517" cy="421" rx="84.0" ry="84.0" fill="rgb(100,239,0)"/>
<ellipse class="bd" cx="1517" cy="421" rx="69.5" ry="76.0" fill="rgb(164,239,0)"/>
<ellipse class="bd" cx="1517" cy="421" rx="59.0" ry="61.0" fill="rgb(227,239,0)"/>
<ellipse class="bd" cx="1517" cy="421" rx="50.0" ry="49.0" fill="rgb(239,189,0)"/>
<ellipse class="bd" cx="1517" cy="421" rx="37.5" ry="38.0" fill="rgb(239,126,0)"/>
<ellipse class="bd" cx="1517" cy="421" rx="29.5" ry="27.0" fill="rgb(239,63,0)"/>
<ellipse class="bd" cx="1517" cy="421" rx="20.0" ry="18.0" fill="rgb(239,0,0)"/>
</g></g></g>
<rect x="1494" y="527" width="14" height="14" fill="#fff"/>
<rect x="1811" y="178.0" width="30" height="23.8" fill="rgb(239,0,0)"/>
<rect x="1811" y="201.4" width="30" height="24.4" fill="rgb(239,63,0)"/>
<rect x="1811" y="225.4" width="30" height="31.9" fill="rgb(239,126,0)"/>
<rect x="1811" y="256.9" width="30" height="24.9" fill="rgb(239,189,0)"/>
<rect x="1811" y="281.4" width="30" height="23.8" fill="rgb(227,239,0)"/>
<rect x="1811" y="304.8" width="30" height="24.3" fill="rgb(164,239,0)"/>
<rect x="1811" y="328.7" width="30" height="23.7" fill="rgb(100,239,0)"/>
<rect x="1811" y="352.0" width="30" height="33.1" fill="rgb(37,239,0)"/>
<rect x="1811" y="384.7" width="30" height="23.7" fill="rgb(0,239,25)"/>
<rect x="1811" y="408.0" width="30" height="24.4" fill="rgb(0,239,88)"/>
<rect x="1811" y="432.0" width="30" height="23.8" fill="rgb(0,239,151)"/>
<rect x="1811" y="455.4" width="30" height="24.9" fill="rgb(0,239,214)"/>
<rect x="1811" y="479.9" width="30" height="31.9" fill="rgb(0,201,239)"/>
<rect x="1811" y="511.4" width="30" height="24.3" fill="rgb(0,138,239)"/>
<rect x="1811" y="535.3" width="30" height="23.8" fill="rgb(0,75,239)"/>
<rect x="1811" y="558.7" width="30" height="23.8" fill="rgb(0,12,239)"/>
<rect x="1811" y="582.1" width="30" height="24.3" fill="rgb(50,0,239)"/>
<rect x="1811" y="606.0" width="30" height="23.8" fill="rgb(113,0,239)"/>
<rect x="1811" y="629.4" width="30" height="33.0" fill="rgb(176,0,239)"/>
<rect x="1811" y="662.0" width="30" height="23.8" fill="rgb(239,0,239)"/>
<text x="1843" y="181" font-family="Liberation Serif" font-size="19" fill="#000">0.385</text>
<text x="1843" y="232" font-family="Liberation Serif" font-size="19" fill="#000">0.349</text>
<text x="1843" y="283" font-family="Liberation Serif" font-size="19" fill="#000">0.313</text>
<text x="1843" y="334" font-family="Liberation Serif" font-size="19" fill="#000">0.277</text>
<text x="1843" y="385" font-family="Liberation Serif" font-size="19" fill="#000">0.241</text>
<text x="1843" y="436" font-family="Liberation Serif" font-size="19" fill="#000">0.205</text>
<text x="1843" y="487" font-family="Liberation Serif" font-size="19" fill="#000">0.169</text>
<text x="1843" y="538" font-family="Liberation Serif" font-size="19" fill="#000">0.133</text>
<text x="1843" y="589" font-family="Liberation Serif" font-size="19" fill="#000">0.097</text>
<text x="1843" y="640" font-family="Liberation Serif" font-size="19" fill="#000">0.061</text>
<text x="1843" y="691" font-family="Liberation Serif" font-size="19" fill="#000">0.025</text>
<text x="1815" y="163" font-family="Liberation Serif" font-size="19" fill="#000">DT [mm]</text>
<text x="0" y="0" transform="translate(1218.5 197.0) rotate(90)" text-anchor="middle" font-family="Liberation Sans" font-size="12" fill="#222">-40</text>
<text x="0" y="0" transform="translate(1218.5 251.8) rotate(90)" text-anchor="middle" font-family="Liberation Sans" font-size="12" fill="#222">-30</text>
<text x="0" y="0" transform="translate(1218.5 306.6) rotate(90)" text-anchor="middle" font-family="Liberation Sans" font-size="12" fill="#222">-20</text>
<text x="0" y="0" transform="translate(1218.5 361.4) rotate(90)" text-anchor="middle" font-family="Liberation Sans" font-size="12" fill="#222">-10</text>
<text x="0" y="0" transform="translate(1218.5 416.2) rotate(90)" text-anchor="middle" font-family="Liberation Sans" font-size="12" fill="#222">0</text>
<text x="0" y="0" transform="translate(1218.5 471.0) rotate(90)" text-anchor="middle" font-family="Liberation Sans" font-size="12" fill="#222">10</text>
<text x="0" y="0" transform="translate(1218.5 525.8) rotate(90)" text-anchor="middle" font-family="Liberation Sans" font-size="12" fill="#222">20</text>
<text x="0" y="0" transform="translate(1218.5 580.6) rotate(90)" text-anchor="middle" font-family="Liberation Sans" font-size="12" fill="#222">30</text>
<text x="0" y="0" transform="translate(1218.5 635.4) rotate(90)" text-anchor="middle" font-family="Liberation Sans" font-size="12" fill="#222">40</text>
<text x="0" y="0" transform="translate(1218.5 690.2) rotate(90)" text-anchor="middle" font-family="Liberation Sans" font-size="12" fill="#222">50</text>
<text x="0" y="0" transform="translate(1186 425) rotate(90)" text-anchor="middle" font-family="Liberation Sans" font-size="12" letter-spacing="1.2" fill="#333">Y-Axis (mm)</text>
<text x="1296.0" y="719.5" text-anchor="middle" font-family="Liberation Sans" font-size="12" letter-spacing="0.6" fill="#333">-30</text>
<text x="1351.0" y="719.5" text-anchor="middle" font-family="Liberation Sans" font-size="12" letter-spacing="0.6" fill="#333">-20</text>
<text x="1406.0" y="719.5" text-anchor="middle" font-family="Liberation Sans" font-size="12" letter-spacing="0.6" fill="#333">-10</text>
<text x="1461.0" y="719.5" text-anchor="middle" font-family="Liberation Sans" font-size="12" letter-spacing="0.6" fill="#333">0</text>
<text x="1516.0" y="719.5" text-anchor="middle" font-family="Liberation Sans" font-size="12" letter-spacing="0.6" fill="#333">10</text>
<text x="1571.0" y="719.5" text-anchor="middle" font-family="Liberation Sans" font-size="12" letter-spacing="0.6" fill="#333">20</text>
<text x="1626.0" y="719.5" text-anchor="middle" font-family="Liberation Sans" font-size="12" letter-spacing="0.6" fill="#333">30</text>
<text x="1681.0" y="719.5" text-anchor="middle" font-family="Liberation Sans" font-size="12" letter-spacing="0.6" fill="#333">40</text>
<text x="1736.0" y="719.5" text-anchor="middle" font-family="Liberation Sans" font-size="12" letter-spacing="0.6" fill="#333">50</text>
<text x="1118" y="727" font-family="Liberation Serif" font-size="12.4" fill="#000">F:/11-8-10/2/plate_00150_0.bmp</text>
</svg>

<!-- bottom -->
<!-- display group -->
<div class="grp" style="left:284px;top:758px;width:251px;height:252px;border-width:1px;border-color:#e3e0d8"></div>
<div class="t" style="left:292px;top:752px;padding:0 2px;background:#d0d7e6"><i class="c">显</i><i class="c">示</i></div>
<div class="t" style="left:295px;top:780px;font-family:'Liberation Mono',monospace;font-size:12px">X<i class="c">轴</i>:</div>
<div class="field" style="left:412px;top:777px;width:109px;height:18px"><span class="t" style="left:3px;top:3px;font-size:12px"><i class="c">文</i><i class="c">件</i><i class="c">序</i><i class="c">号</i></span><div class="arrbtn"></div></div>
<div class="t" style="left:295px;top:806px;font-family:'Liberation Mono',monospace;font-size:12px">Y<i class="c">轴</i>:</div>
<div class="field" style="left:412px;top:803px;width:109px;height:18px"><span class="t mono" style="left:3px;top:4px;font-size:11px">DT</span><div class="arrbtn"></div></div>
<div class="grp" style="left:296px;top:834px;width:225px;height:102px;border-width:1px;border-color:#e3e0d8"></div>
<div class="t" style="left:304px;top:828px;padding:0 2px;background:#d0d7e6"><i class="c">显</i><i class="c">示</i><i class="c">类</i><i class="c">型</i></div>
<div class="a" style="left:308px;top:856px;width:13px;height:13px;border-radius:50%;border:1px solid #666;background:#f4f4f4"></div>
<div class="t" style="left:326px;top:856px"><i class="c">点</i></div>
<div class="a" style="left:308px;top:881px;width:13px;height:13px;border-radius:50%;background:#0f5fb8"></div>
<div class="a" style="left:312px;top:885px;width:5px;height:5px;border-radius:50%;background:#fff"></div>
<div class="t" style="left:326px;top:881px"><i class="c">线</i></div>
<div class="a" style="left:308px;top:906px;width:13px;height:13px;border-radius:50%;border:1px solid #666;background:#f4f4f4"></div>
<div class="t" style="left:326px;top:906px"><i class="c">线</i><i class="c">和</i><i class="c">点</i></div>
<div class="btn" style="left:296px;top:944px;width:109px;height:23px;line-height:21px"><i class="c">清</i><i class="c">空</i><i class="c">曲</i><i class="c">线</i></div>
<div class="btn" style="left:412px;top:944px;width:109px;height:23px;line-height:21px"><i class="c">视</i><i class="c">图</i><i class="c">适</i><i class="c">配</i></div>
<div class="btn" style="left:296px;top:974px;width:109px;height:23px;line-height:21px"><i class="c">保</i><i class="c">存</i><i class="c">数</i><i class="c">据</i></div>
<div class="btn" style="left:412px;top:974px;width:109px;height:23px;line-height:21px"><i class="c">保</i><i class="c">存</i><i class="c">曲</i><i class="c">线</i></div>
<!-- chart -->
<div class="a" style="left:561px;top:770px;width:1341px;height:221px;background:#fff;border-radius:6px"></div>
<svg class="a" style="left:561px;top:770px" width="1341" height="221" viewBox="561 770 1341 221">

<path d="M628 797.5H1790" stroke="#e2e2e2" stroke-width="1"/>
<path d="M628 864.0H1790" stroke="#e2e2e2" stroke-width="1"/>
<path d="M628 930.5H1790" stroke="#e2e2e2" stroke-width="1"/>
<path d="M628 930.5H1790" stroke="#d6d6d6" stroke-width="2"/>
<path d="M633.5 797V935" stroke="#e2e2e2" stroke-width="1"/>
<path d="M922.5 797V935" stroke="#e2e2e2" stroke-width="1"/>
<path d="M1212.0 797V935" stroke="#e2e2e2" stroke-width="1"/>
<path d="M1501.0 797V935" stroke="#e2e2e2" stroke-width="1"/>
<path d="M1790.0 797V935" stroke="#e2e2e2" stroke-width="1"/>
<path d="M633.5 797V935" stroke="#d6d6d6" stroke-width="2"/>
<path d="M633.0 930.6 L666.0 928.0 L699.0 917.7 L732.0 923.3 L765.0 914.0 L798.0 921.7 L831.0 914.7 L864.0 913.3 L897.5 894.0 L930.5 908.0 L963.6 901.8 L996.7 903.4 L1030.0 920.8 L1063.0 923.3 L1096.0 908.6 L1129.0 902.5 L1162.0 899.2 L1195.0 898.7 L1228.0 888.9 L1261.0 890.5 L1294.0 876.7 L1327.0 879.0 L1360.0 866.6 L1393.0 869.0 L1426.0 923.6 L1459.0 923.3 L1492.6 891.6 L1525.6 895.8 L1558.7 867.5 L1591.7 868.8 L1624.8 850.0 L1657.9 849.6 L1691.0 819.8 L1724.0 821.6 L1757.0 799.3 L1790.0 798.5" stroke="#2a93cf" stroke-width="2" fill="none" stroke-linejoin="round"/>
<text x="627" y="801" text-anchor="end" font-family="Liberation Mono" font-size="11" fill="#222">0.38</text>
<text x="627" y="868" text-anchor="end" font-family="Liberation Mono" font-size="11" fill="#222">0.19</text>
<text x="627" y="934" text-anchor="end" font-family="Liberation Mono" font-size="11" fill="#222">0.00</text>
<text x="632" y="945" text-anchor="middle" font-family="Liberation Mono" font-size="11" fill="#222">0.0</text>
<text x="922" y="945" text-anchor="middle" font-family="Liberation Mono" font-size="11" fill="#222">8.8</text>
<text x="1212" y="945" text-anchor="middle" font-family="Liberation Mono" font-size="11" fill="#222">17.5</text>
<text x="1501" y="945" text-anchor="middle" font-family="Liberation Mono" font-size="11" fill="#222">26.3</text>
<text x="1785" y="945" text-anchor="middle" font-family="Liberation Mono" font-size="11" fill="#222">35.0</text>
<text x="0" y="0" transform="translate(594 864) rotate(-90)" text-anchor="middle" font-family="Liberation Mono" font-size="11" font-weight="bold" fill="#333">DT[ mm]</text>
<rect x="1815.5" y="868.5" width="6" height="6" fill="#2a93cf" stroke="#333" stroke-width="1"/>
<text x="1826" y="875" font-family="Liberation Mono" font-size="11" fill="#222">Point 0</text>
<text x="1820" y="973" font-family="Liberation Mono" font-size="11" fill="#222">x: 15.9283</text>
<text x="1820" y="987" font-family="Liberation Mono" font-size="11" fill="#222">y: 0.4182</text>
</svg>
<div class="t" style="left:1186px;top:954px;font-size:13px;font-weight:bold;color:#333"><i class="c">文</i><i class="c">件</i><i class="c">序</i><i class="c">号</i></div>
<div class="t" style="left:582px;top:968px;font-size:11px;color:#222"><i class="c">当</i><i class="c">前</i><i class="c">选</i><i class="c">择</i><span class="mono">: Point 0</span></div>

</body></html>
